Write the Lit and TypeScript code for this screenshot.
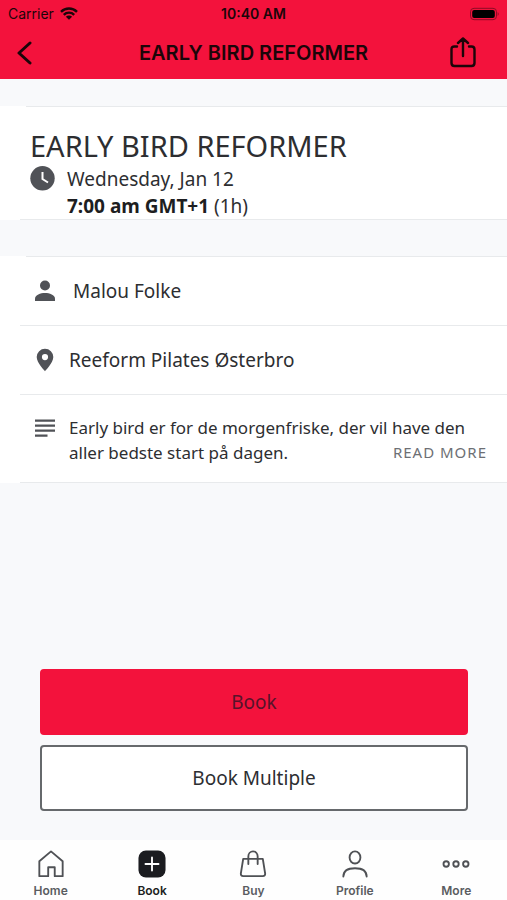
import { LitElement, html, css, svg, TemplateResult } from "lit";
import { customElement, property } from "lit/decorators.js";
import { classMap } from "lit/directives/class-map.js";

interface Tab {
  label: string;
  icon: TemplateResult;
}

const tabs: Tab[] = [
  {
    label: "Home",
    icon: svg`<path d="M2.500 12 15 1.500 27.500 12V28H19V18.500H12V28H2.500Z" />`,
  },
  {
    label: "Book",
    icon: svg`<rect class="solid" x="0.500" y="0.500" width="29" height="29" rx="8" /><path class="plus" d="M15 8v14M8 15h14" />`,
  },
  {
    label: "Buy",
    icon: svg`<path d="M4.500 9.500H25.500L28 25Q28.300 28 25.500 28H4.500Q1.700 28 2 25ZM10 15V7a5 5.500 0 0 1 10 0V15" />`,
  },
  {
    label: "Profile",
    icon: svg`<ellipse cx="15" cy="8" rx="5.800" ry="6.500" /><path d="M2.500 28.500C2.500 22 8 19.500 15 19.500s12.500 2.500 12.500 9" />`,
  },
  {
    label: "More",
    icon: svg`<circle cx="4.500" cy="15" r="2.900" /><circle cx="15" cy="15" r="2.900" /><circle cx="25.500" cy="15" r="2.900" />`,
  },
];

@customElement("app-header")
export class AppHeader extends LitElement {
  @property() heading = "";

  static styles = css`
    :host {
      display: block;
      background: #f3123c;
      color: #1c0509;
      font-family: Inter, "Liberation Sans", sans-serif;
    }
    .status {
      display: grid;
      grid-template-columns: 1fr auto 1fr;
      align-items: center;
      height: 26px;
      padding: 0 8px;
      font-size: 14px;
    }
    .carrier {
      display: flex;
      align-items: center;
      gap: 6px;
    }
    .time {
      font-weight: 600;
    }
    .battery {
      justify-self: end;
    }
    .bar {
      display: grid;
      grid-template-columns: 32px 1fr 32px;
      align-items: center;
      height: 53px;
      padding: 0 28px 0 8px;
      box-sizing: border-box;
    }
    h1 {
      margin: 0;
      padding-left: 20px;
      text-align: center;
      font-size: 20px;
      font-weight: 600;
      line-height: 24px;
    }
    button {
      display: flex;
      align-items: center;
      justify-content: center;
      height: 36px;
      padding: 0;
      border: 0;
      background: none;
      color: inherit;
    }
    .line {
      fill: none;
      stroke: currentColor;
      stroke-linecap: round;
      stroke-linejoin: round;
    }
  `;

  render() {
    return html`
      <div class="status">
        <div class="carrier">
          <span>Carrier</span>
          <svg width="18" height="13" viewBox="0 0 18 13" aria-hidden="true">
            <g fill="none" stroke="currentColor" stroke-width="2.4">
              <path d="M1 4.800a11.300 11.300 0 0 1 16 0" />
              <path d="M3.800 7.800a7.400 7.400 0 0 1 10.400 0" />
            </g>
            <path fill="currentColor" d="M9 12.800 5.900 9.700a4.400 4.400 0 0 1 6.200 0Z" />
          </svg>
        </div>
        <span class="time">10:40 AM</span>
        <svg class="battery" width="30" height="14" viewBox="0 0 30 14" aria-hidden="true">
          <rect x="1.500" y="1.300" width="26" height="11.400" rx="3.500" fill="none" stroke="#8c0c25" />
          <rect x="3.200" y="3" width="22.600" height="8" rx="2" />
          <path d="M28.700 5v4q2-2 0-4" fill="#8c0c25" />
        </svg>
      </div>
      <div class="bar">
        <button aria-label="Back">
          <svg class="line" width="16" height="26" viewBox="0 0 16 26" stroke-width="3">
            <path d="M14 3 3 13l11 10" />
          </svg>
        </button>
        <h1>${this.heading}</h1>
        <button aria-label="Share">
          <svg class="line" width="28" height="32" viewBox="0 0 28 32" stroke-width="2.400">
            <path d="M8 9.500H5.500Q2.500 9.500 2.500 12.500V26Q2.500 29 5.500 29H22.500Q25.500 29 25.500 26V12.500Q25.500 9.500 22.500 9.500H20M14 19V1.500M9 6l5-4.500L19 6" />
          </svg>
        </button>
      </div>
    `;
  }
}

@customElement("tab-bar")
export class TabBar extends LitElement {
  @property() current = "";

  static styles = css`
    :host {
      display: block;
      background: #fefefe;
      font-family: Inter, "Noto Sans", sans-serif;
    }
    nav {
      display: grid;
      grid-template-columns: repeat(5, 1fr);
      height: 60px;
    }
    a {
      display: flex;
      flex-direction: column;
      align-items: center;
      gap: 5px;
      padding-top: 10px;
      color: #5a5c61;
      font-size: 12px;
      font-weight: 600;
      line-height: 16px;
      text-decoration: none;
    }
    .current {
      color: #1d1f22;
    }
    svg {
      fill: none;
      stroke: #4f5155;
      stroke-width: 2;
      stroke-linecap: round;
      stroke-linejoin: round;
    }
    .solid {
      fill: #1b1c20;
      stroke: none;
    }
    .plus {
      stroke: #fff;
    }
  `;

  render() {
    return html`<nav>
      ${tabs.map(
        (tab) => html`<a href="#" class=${classMap({ current: tab.label === this.current })}>
          <svg width="28" height="28" viewBox="0 0 30 30" aria-hidden="true">${tab.icon}</svg>
          <span>${tab.label}</span>
        </a>`
      )}
    </nav>`;
  }
}

@customElement("app-root")
export class AppRoot extends LitElement {
  static styles = css`
    :host {
      display: flex;
      flex-direction: column;
      min-height: 100vh;
      background: #f8f9fb;
      color: #2d2e31;
      font-family: "Noto Sans", "Open Sans", sans-serif;
      font-size: 19px;
      line-height: 27px;
    }
    main {
      flex: 1;
      display: flex;
      flex-direction: column;
    }
    h2,
    p {
      margin: 0;
    }
    section {
      background: #fff;
    }
    .rule {
      height: 1px;
      margin-left: 20px;
      background: #e8eaec;
    }
    .rule.inset {
      margin-left: 26px;
    }
    .summary {
      margin-top: 27px;
    }
    h2 {
      padding: 19px 30px 0;
      font-size: 29px;
      font-weight: 400;
      line-height: 40px;
    }
    .when {
      display: flex;
      gap: 12px;
      padding: 0 30px;
      height: 53px;
    }
    strong {
      color: #1d1e21;
    }
    .details {
      margin-top: 36px;
    }
    .row {
      display: flex;
      align-items: center;
      gap: 12px;
      min-height: 68px;
      padding: 0 20px 0 33px;
      box-sizing: border-box;
    }
    .name {
      padding-left: 4px;
    }
    .about {
      align-items: flex-start;
      padding-top: 20px;
      padding-bottom: 17px;
      font-size: 17px;
      line-height: 25px;
    }
    .about svg {
      margin-top: 4px;
    }
    .about p {
      flex: 1;
    }
    .more {
      float: right;
      color: #6d6f74;
      font-size: 15px;
      letter-spacing: 1px;
      text-decoration: none;
    }
    svg {
      flex: none;
      fill: #505257;
    }
    .actions {
      display: flex;
      flex-direction: column;
      gap: 10px;
      margin-top: auto;
      padding: 40px 39px 29px 40px;
    }
    .actions button {
      height: 66px;
      border: 2px solid #66696c;
      border-radius: 4px;
      background: #fff;
      color: #2d2e31;
      font: inherit;
    }
    .actions .primary {
      border-color: #f3123c;
      background: #f3123c;
      color: #57132a;
    }
  `;

  render() {
    return html`
      <app-header heading="EARLY BIRD REFORMER"></app-header>
      <main>
        <section class="summary">
          <div class="rule inset"></div>
          <h2>EARLY BIRD REFORMER</h2>
          <div class="when">
            <svg width="25" height="25" viewBox="0 0 25 25" aria-hidden="true">
              <circle cx="12.500" cy="12.300" r="12.200" />
              <path d="M12.500 6v7l5.500 3.500" fill="none" stroke="#fff" stroke-width="2" />
            </svg>
            <div>
              <p>Wednesday, Jan 12</p>
              <p><strong>7:00 am GMT+1</strong> (1h)</p>
            </div>
          </div>
          <div class="rule"></div>
        </section>
        <section class="details">
          <div class="rule inset"></div>
          <div class="row">
            <svg width="24" height="24" viewBox="0 0 24 24" aria-hidden="true">
              <circle cx="12" cy="6.500" r="5" />
              <path d="M2 22v-2.500C2 16 7.500 14 12 14s10 2 10 5.500V22Z" />
            </svg>
            <span class="name">Malou Folke</span>
          </div>
          <div class="rule"></div>
          <div class="row">
            <svg width="24" height="24" viewBox="0 0 24 24" aria-hidden="true">
              <path fill-rule="evenodd" d="M12 .8a8.300 8.300 0 0 0-8.300 8.300C3.700 15 12 23.200 12 23.200S20.300 15 20.300 9.100A8.300 8.300 0 0 0 12 .8Zm0 5.200a3.100 3.100 0 1 1 0 6.200 3.100 3.100 0 0 1 0-6.200Z" />
            </svg>
            <span>Reeform Pilates Østerbro</span>
          </div>
          <div class="rule"></div>
          <div class="row about">
            <svg width="24" height="24" viewBox="0 0 24 24" aria-hidden="true">
              <path d="M2 .5h20v2.300H2ZM2 5.500h20v2.300H2ZM2 10.500h20v2.300H2ZM2 15.500h12.500v2.300H2Z" />
            </svg>
            <p>
              Early bird er for de morgenfriske, der vil have den aller bedste start på dagen.
              <a class="more" href="#">READ MORE</a>
            </p>
          </div>
          <div class="rule"></div>
        </section>
        <div class="actions">
          <button class="primary">Book</button>
          <button>Book Multiple</button>
        </div>
      </main>
      <tab-bar current="Book"></tab-bar>
    `;
  }
}
